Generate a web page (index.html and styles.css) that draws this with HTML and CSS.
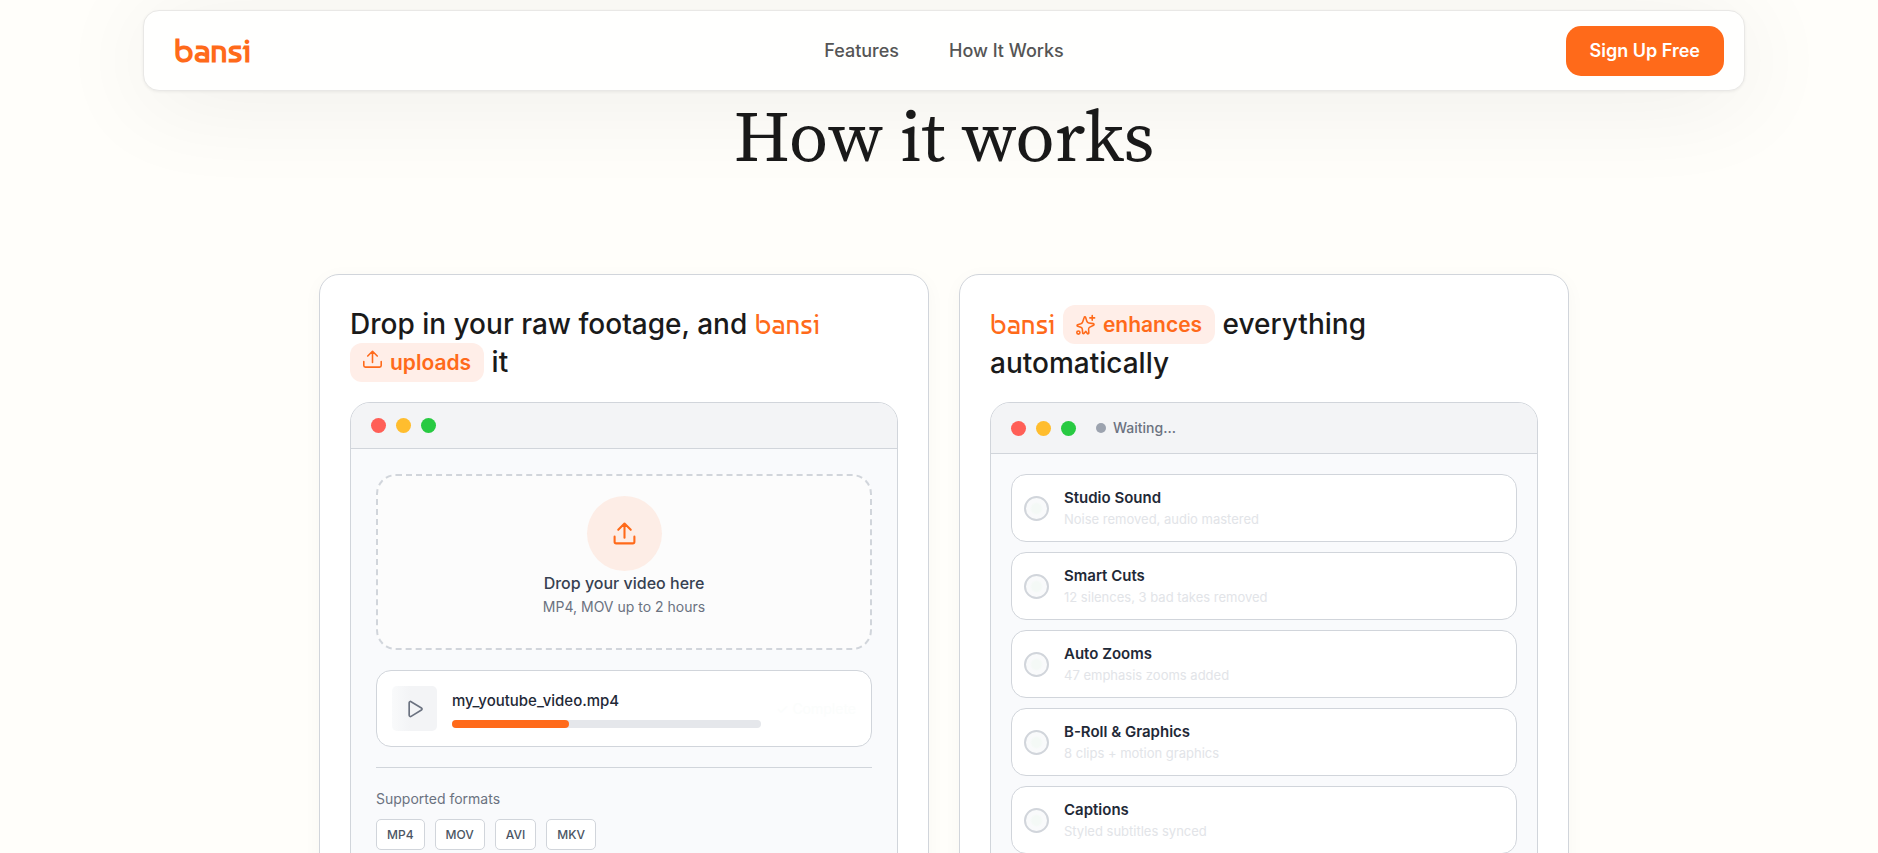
FILE: index.html
```html
<!DOCTYPE html>
<html lang="en">
<head>
    <meta charset="UTF-8">
    <meta name="viewport" content="width=device-width, initial-scale=1.0">
    <title>Bansi - How it works</title>
    <link rel="stylesheet" href="styles.css">
</head>
<body>
    <header class="header">
        <nav class="navbar">
            <a href="#" class="logo">bansi</a>
            <div class="nav-links">
                <a href="#features">Features</a>
                <a href="#how-it-works">How It Works</a>
            </div>
            <button type="button" class="signup-btn">Sign Up Free</button>
        </nav>
    </header>

    <main class="how" id="how-it-works">
        <h1>How it works</h1>

        <div class="steps">
            <section class="card">
                <h2 class="card-title">Drop in your raw footage, and <span class="brand">bansi</span>
                    <span class="pill"><svg class="pill-icon raised" viewBox="0 0 24 24"><path d="M12 15V2M6 7l6-6 6 6M1 14v5a2 2 0 0 0 2 2h18a2 2 0 0 0 2-2v-5"/></svg>uploads</span> it</h2>

                <div class="window">
                    <div class="window-bar">
                        <div class="dots">
                            <span class="dot red"></span>
                            <span class="dot yellow"></span>
                            <span class="dot green"></span>
                        </div>
                    </div>
                    <div class="upload-body">
                        <div class="dropzone">
                            <div class="upload-circle">
                                <svg viewBox="0 0 24 24"><path d="M12 16V3M6 8.500l6-6 6 6M2.500 15v5a1.500 1.500 0 0 0 1.500 1.500h16a1.500 1.500 0 0 0 1.500-1.500v-5"/></svg>
                            </div>
                            <p class="drop-text">Drop your video here</p>
                            <p class="drop-hint">MP4, MOV up to 2 hours</p>
                        </div>

                        <div class="file">
                            <div class="thumb">
                                <svg viewBox="0 0 24 24"><path d="M5 4.500v15a1.500 1.500 0 0 0 2.300 1.300l12.400-7.500a1.500 1.500 0 0 0 0-2.600L7.300 3.200A1.500 1.500 0 0 0 5 4.500z"/></svg>
                            </div>
                            <div class="file-info">
                                <div class="file-name">my_youtube_video.mp4</div>
                                <div class="progress">
                                    <div class="progress-fill" style="width: 38%"></div>
                                </div>
                            </div>
                            <span class="file-status">✓ Complete</span>
                        </div>

                        <div class="formats">
                            <p class="formats-label">Supported formats</p>
                            <div class="format-list">
                                <span class="format">MP4</span>
                                <span class="format">MOV</span>
                                <span class="format">AVI</span>
                                <span class="format">MKV</span>
                            </div>
                        </div>
                    </div>
                </div>
            </section>

            <section class="card">
                <h2 class="card-title"><span class="brand">bansi</span>
                    <span class="pill"><svg class="pill-icon" viewBox="0 0 24 24"><path d="M10.300 2.500c.3-1 1.600-1 1.900 0l1.500 4.700c.4 1.200 1.300 2 2.500 2.200l5.600.9c1.100.2 1.300 1.500.4 2l-4.700 2.400c-1.100.6-1.700 1.600-1.600 2.800l.3 4.600c0 1.100-1.300 1.500-1.900.6L12.500 20l-2.200 2.500c-.7.8-1.800.4-1.900-.6L8 17.300c-.1-1.200-.8-2-1.900-2.400l-4-1.300c-1-.3-1-1.700 0-2l4-1.200c1.100-.4 1.900-1.200 2.300-2.300z"/><path d="M20.500 0v6M17.500 3h6"/><circle cx="3" cy="21.500" r="2"/></svg>enhances</span> everything automatically</h2>

                <div class="window">
                    <div class="window-bar">
                        <div class="dots">
                            <span class="dot red"></span>
                            <span class="dot yellow"></span>
                            <span class="dot green"></span>
                        </div>
                        <div class="status">Waiting...</div>
                    </div>
                    <ul class="tasks">
                        <li class="task">
                            <span class="task-check"></span>
                            <div>
                                <div class="task-name">Studio Sound</div>
                                <div class="task-desc">Noise removed, audio mastered</div>
                            </div>
                        </li>
                        <li class="task">
                            <span class="task-check"></span>
                            <div>
                                <div class="task-name">Smart Cuts</div>
                                <div class="task-desc">12 silences, 3 bad takes removed</div>
                            </div>
                        </li>
                        <li class="task">
                            <span class="task-check"></span>
                            <div>
                                <div class="task-name">Auto Zooms</div>
                                <div class="task-desc">47 emphasis zooms added</div>
                            </div>
                        </li>
                        <li class="task">
                            <span class="task-check"></span>
                            <div>
                                <div class="task-name">B-Roll &amp; Graphics</div>
                                <div class="task-desc">8 clips + motion graphics</div>
                            </div>
                        </li>
                        <li class="task">
                            <span class="task-check"></span>
                            <div>
                                <div class="task-name">Captions</div>
                                <div class="task-desc">Styled subtitles synced</div>
                            </div>
                        </li>
                    </ul>
                </div>
            </section>
        </div>
    </main>
</body>
</html>
```
FILE: styles.css
```css
* {
    margin: 0;
    padding: 0;
    box-sizing: border-box;
}

body {
    font-family: Inter, 'Liberation Sans', sans-serif;
    background: #fffefa;
    color: #1a1a1a;
    padding-left: 10px;
}

a {
    color: inherit;
    text-decoration: none;
}

svg {
    overflow: visible;
    fill: none;
    stroke: currentColor;
    stroke-width: 2;
    stroke-linecap: round;
    stroke-linejoin: round;
}

/* Header */
.header {
    position: sticky;
    top: 0;
    z-index: 10;
    padding: 10px 16px 0;
}

.navbar {
    display: grid;
    grid-template-columns: 1fr auto 1fr;
    align-items: center;
    max-width: 1602px;
    height: 81px;
    margin: 0 auto;
    padding: 0 20px;
    background: #fffffe;
    border: 1px solid #e9e8e6;
    border-radius: 16px;
    box-shadow: 0 1px 3px rgba(0, 0, 0, 0.06), 0 10px 100px rgba(0, 0, 0, 0.07);
}

.logo {
    padding-left: 10px;
    font-family: Baumans, Lato, sans-serif;
    font-size: 33px;
    font-weight: 700;
    line-height: 40px;
    color: #ff6a1a;
}

.nav-links {
    display: flex;
    gap: 50px;
    font-size: 18px;
    font-weight: 500;
    color: #555;
}

.signup-btn {
    justify-self: end;
    height: 50px;
    padding: 0 24px;
    background: #ff6a1a;
    color: white;
    border: none;
    border-radius: 15px;
    font-family: inherit;
    font-size: 18px;
    font-weight: 600;
    cursor: pointer;
}

/* Steps */
.how {
    max-width: 1282px;
    margin: 0 auto;
    padding: 0 16px 50px;
}

h1 {
    margin-bottom: 93px;
    font-family: 'Source Serif 4', 'Source Serif Pro', 'DejaVu Serif', serif;
    font-size: 72px;
    font-weight: 400;
    line-height: 90px;
    text-align: center;
}

.steps {
    display: grid;
    grid-template-columns: 1fr 1fr;
    gap: 30px;
}

.card {
    padding: 30px;
    background: white;
    border: 1px solid #d1d5db;
    border-radius: 20px;
    box-shadow: 0 4px 20px rgba(0, 0, 0, 0.03);
}

.card-title {
    margin-bottom: 20px;
    font-size: 28px;
    font-weight: 500;
    line-height: 38px;
}

.brand {
    font-family: Baumans, Lato, sans-serif;
    font-weight: 400;
    line-height: 1;
    color: #ff6a1a;
}

.pill {
    display: inline-flex;
    align-items: center;
    gap: 8px;
    height: 39px;
    padding: 0 13px;
    vertical-align: top;
    background: #ffeee8;
    border-radius: 12px;
    color: #ff6a1a;
    font-size: 21px;
    font-weight: 600;
}

.pill-icon {
    width: 19px;
    height: 20px;
}

.pill-icon.raised {
    margin-bottom: 5px;
}

.window {
    overflow: hidden;
    background: #f9fafc;
    border: 1px solid #d1d5db;
    border-radius: 20px;
}

.window-bar {
    display: flex;
    align-items: center;
    gap: 20px;
    padding: 15px 20px;
    background: #f3f4f6;
    border-bottom: 1px solid #d1d5db;
}

.dots {
    display: flex;
    gap: 10px;
}

.dot {
    width: 15px;
    height: 15px;
    border-radius: 50%;
}

.dot.red {
    background: #ff5f57;
}

.dot.yellow {
    background: #ffbd2e;
}

.dot.green {
    background: #28ca42;
}

.status {
    display: flex;
    align-items: center;
    gap: 7px;
    font-size: 14px;
    font-weight: 500;
    line-height: 20px;
    color: #6b7280;
}

.status::before {
    content: '';
    width: 10px;
    height: 10px;
    border-radius: 50%;
    background: #9ca3af;
}

/* Upload window */
.upload-body {
    padding: 25px;
}

.dropzone {
    padding: 20px 20px 29px;
    background: #fcfcfc;
    border: 2px dashed #d1d5db;
    border-radius: 20px;
    text-align: center;
    line-height: 24px;
}

.upload-circle {
    display: flex;
    align-items: center;
    justify-content: center;
    width: 75px;
    height: 75px;
    margin: 0 auto;
    background: #fdede6;
    border-radius: 50%;
    color: #ff6a1a;
}

.upload-circle svg {
    width: 25px;
    height: 25px;
}

.drop-text {
    font-size: 16px;
    font-weight: 500;
    color: #374151;
}

.drop-hint {
    font-size: 14px;
    color: #6b7280;
}

.file {
    display: flex;
    align-items: center;
    gap: 15px;
    margin: 20px 0;
    padding: 15px;
    background: white;
    border: 1px solid #d1d5db;
    border-radius: 15px;
}

.thumb {
    display: flex;
    align-items: center;
    justify-content: center;
    width: 45px;
    height: 45px;
    background: linear-gradient(90deg, #f9fafb, #f3f4f6 40%);
    border-radius: 5px;
    color: #6b7280;
}

.thumb svg {
    width: 20px;
    height: 20px;
}

.file-info {
    flex: 1;
}

.file-name {
    margin-bottom: 8px;
    font-size: 15px;
    font-weight: 500;
    line-height: 22px;
    color: #1f2937;
}

.progress {
    height: 8px;
    background: #e5e7eb;
    border-radius: 4px;
}

.progress-fill {
    height: 100%;
    background: #ff6a1a;
    border-radius: 4px;
}

.file-status {
    font-size: 14px;
    color: #fbfdfc;
}

.formats {
    padding-top: 20px;
    border-top: 1px solid #d1d5db;
}

.formats-label {
    margin-bottom: 10px;
    font-size: 14px;
    line-height: 21px;
    color: #6b7280;
}

.format-list {
    display: flex;
    gap: 10px;
}

.format {
    padding: 5px 10px;
    background: white;
    border: 1px solid #d1d5db;
    border-radius: 5px;
    font-size: 12px;
    font-weight: 500;
    line-height: 19px;
    color: #4b5563;
}

/* Task window */
.tasks {
    display: flex;
    flex-direction: column;
    gap: 10px;
    padding: 20px;
    list-style: none;
}

.task {
    display: flex;
    align-items: center;
    gap: 15px;
    padding: 12px;
    background: white;
    border: 1px solid #d1d5db;
    border-radius: 15px;
}

.task-check {
    width: 25px;
    height: 25px;
    background: radial-gradient(circle, #f4f9f6 30%, #f9fafb 45%);
    border: 2px solid #d1d5db;
    border-radius: 50%;
}

.task-name {
    font-size: 15px;
    font-weight: 600;
    line-height: 22px;
    color: #1f2937;
}

.task-desc {
    font-size: 13px;
    line-height: 20px;
    color: #e2e4e8;
}
```
